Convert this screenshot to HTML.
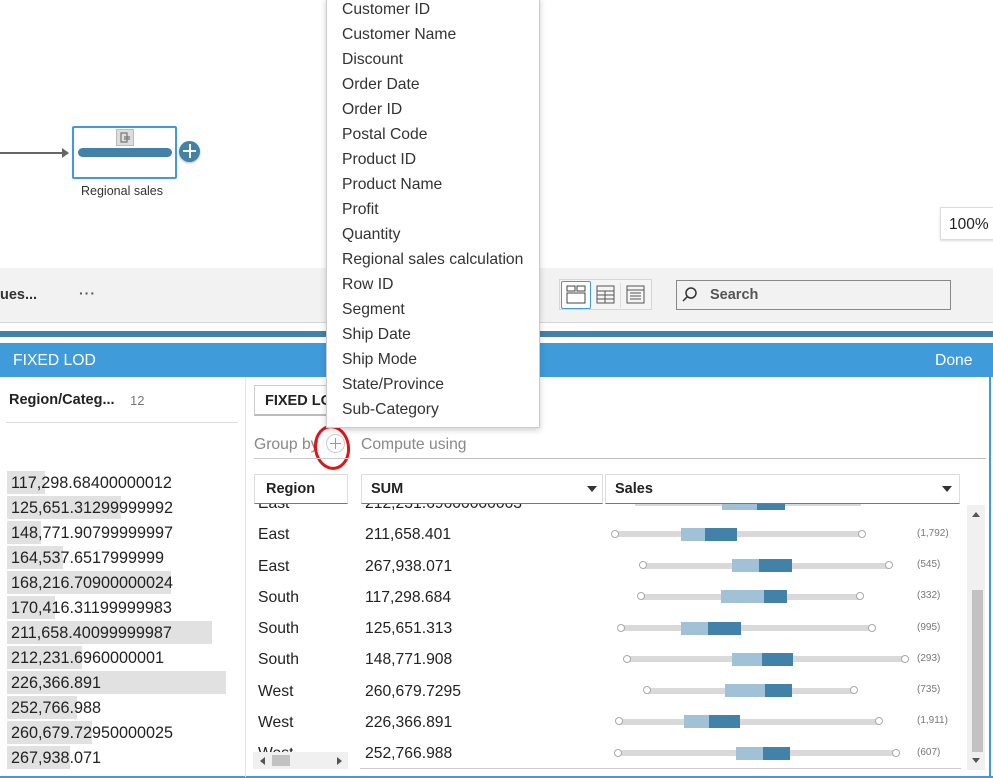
<!DOCTYPE html>
<html><head><meta charset="utf-8">
<style>
*{margin:0;padding:0;box-sizing:border-box}
body{width:993px;height:778px;overflow:hidden;background:#fff;font-family:"Liberation Sans",sans-serif;color:#222;position:relative}
.a{position:absolute}
.t{position:absolute;font-size:15.7px;white-space:nowrap}
.dd div{position:absolute;left:15px;font-size:15.7px;color:#333;white-space:nowrap}
.bar{position:absolute;left:7px;height:23px;background:#e1e1e1}
.num{position:absolute;left:11px;font-size:16.2px;color:#222;white-space:nowrap}
.wh{position:absolute;height:6px;background:#d9d9d9}
.dot{position:absolute;width:8px;height:8px;border:1px solid #aaa;border-radius:50%;background:#fff}
.lb{position:absolute;height:13px;background:#a0c1d6}
.db{position:absolute;height:13px;background:#4281a8}
.cnt{position:absolute;left:917px;font-size:10px;color:#777}
</style></head><body>

<div class="a" style="left:0;top:152px;width:66px;height:2px;background:#666"></div>
<div class="a" style="left:62px;top:148px;width:0;height:0;border-left:7px solid #666;border-top:5px solid transparent;border-bottom:5px solid transparent"></div>
<div class="a" style="left:72px;top:126px;width:105px;height:53px;border:2px solid #3f9bda;border-radius:2px;background:#fff"></div>
<div class="a" style="left:116px;top:129px;width:18px;height:17px;background:#ddd;border:1px solid #bbb"></div>
<svg class="a" style="left:117px;top:130px" width="16" height="15"><path d="M4 3h6v9H4z" fill="none" stroke="#777" stroke-width="1.2"/><path d="M7 7h6M7 9h6" stroke="#777" stroke-width="1.2"/></svg>
<div class="a" style="left:78px;top:148px;width:94px;height:9px;border-radius:5px;background:#4281a8"></div>
<div class="a" style="left:179px;top:141px;width:21px;height:21px;border-radius:50%;background:#4281a8;box-shadow:0 1px 2px rgba(0,0,0,.3)"></div>
<div class="a" style="left:183px;top:150px;width:13px;height:2px;background:#fff"></div>
<div class="a" style="left:189px;top:144px;width:2px;height:14px;background:#fff"></div>
<div class="t" style="left:81px;top:184px;font-size:12.5px;color:#333">Regional sales</div>

<div class="a" style="left:940px;top:207px;width:60px;height:33px;border:1px solid #ddd;box-shadow:0 1px 2px rgba(0,0,0,.15);background:#fff"></div>
<div class="t" style="left:949px;top:216px;font-size:15.5px">100%</div>

<div class="a" style="left:0;top:268px;width:993px;height:55px;background:#f2f2f2;border-bottom:1px solid #d6d6d6"></div>
<div class="t" style="left:0;top:287px;font-weight:bold;font-size:14.5px;color:#333">ues...</div>
<div class="t" style="left:79px;top:285px;font-weight:bold;font-size:14px;color:#555;letter-spacing:1px">···</div>
<div class="a" style="left:559px;top:279px;width:93px;height:31px;border:1px solid #d6d6d6;background:#f5f5f5"></div>
<div class="a" style="left:561px;top:281px;width:30px;height:28px;border:1px solid #3f9bda;border-radius:2px;background:#fff"></div>
<svg class="a" style="left:566px;top:285px" width="20" height="20"><rect x="1" y="1" width="8" height="5" fill="none" stroke="#444"/><rect x="11" y="1" width="8" height="5" fill="none" stroke="#444"/><rect x="1" y="8" width="18" height="10" fill="none" stroke="#444"/></svg>
<svg class="a" style="left:596px;top:285px" width="20" height="20"><rect x="1" y="1" width="17" height="17" fill="none" stroke="#555"/><path d="M1 6h17M1 10h17M1 14h17M9 6v12" stroke="#555"/></svg>
<div class="a" style="left:620px;top:283px;width:1px;height:25px;background:#ddd"></div>
<svg class="a" style="left:626px;top:285px" width="20" height="20"><rect x="1" y="1" width="17" height="17" fill="none" stroke="#555"/><path d="M1 5h17M4 8h11M4 11h11M4 14h11" stroke="#555"/></svg>
<div class="a" style="left:676px;top:280px;width:275px;height:30px;border:1px solid #888;background:#f2f2f2"></div>
<svg class="a" style="left:681px;top:286px" width="18" height="18"><circle cx="10" cy="7" r="5" fill="none" stroke="#333" stroke-width="1.5"/><path d="M6.5 10.5L2 15" stroke="#333" stroke-width="1.5"/></svg>
<div class="t" style="left:710px;top:287px;font-weight:bold;font-size:14.5px;color:#555">Search</div>

<div class="a" style="left:0;top:331px;width:993px;height:6px;background:#4281a8"></div>
<div class="a" style="left:0;top:343px;width:993px;height:34px;background:#3f9bda"></div>
<div class="t" style="left:13px;top:352px;color:#fff">FIXED LOD</div>
<div class="t" style="left:935px;top:352px;color:#fff">Done</div>
<div class="a" style="left:989px;top:343px;width:2px;height:435px;background:#3f9bda"></div>
<div class="a" style="left:0;top:776px;width:993px;height:2px;background:#3f9bda"></div>

<div class="a" style="left:245px;top:377px;width:1px;height:400px;background:#e5e5e5"></div>
<div class="t" style="left:9px;top:392px;font-weight:bold;font-size:14.5px">Region/Categ...</div>
<div class="t" style="left:130px;top:393px;font-size:13px;color:#777">12</div>
<div class="a" style="left:6px;top:422px;width:232px;height:1px;background:#ddd"></div>
<div class="bar" style="top:471px;width:38px"></div><div class="num" style="top:474px">117,298.68400000012</div>
<div class="bar" style="top:496px;width:114px"></div><div class="num" style="top:499px">125,651.31299999992</div>
<div class="bar" style="top:521px;width:34px"></div><div class="num" style="top:524px">148,771.90799999997</div>
<div class="bar" style="top:546px;width:56px"></div><div class="num" style="top:549px">164,537.6517999999</div>
<div class="bar" style="top:571px;width:164px"></div><div class="num" style="top:574px">168,216.70900000024</div>
<div class="bar" style="top:596px;width:48px"></div><div class="num" style="top:599px">170,416.31199999983</div>
<div class="bar" style="top:621px;width:205px"></div><div class="num" style="top:624px">211,658.40099999987</div>
<div class="bar" style="top:646px;width:75px"></div><div class="num" style="top:649px">212,231.6960000001</div>
<div class="bar" style="top:671px;width:219px"></div><div class="num" style="top:674px">226,366.891</div>
<div class="bar" style="top:696px;width:70px"></div><div class="num" style="top:699px">252,766.988</div>
<div class="bar" style="top:721px;width:85px"></div><div class="num" style="top:724px">260,679.72950000025</div>
<div class="bar" style="top:746px;width:63px"></div><div class="num" style="top:749px">267,938.071</div>

<div class="a" style="left:254px;top:385px;width:90px;height:31px;border:1px solid #ccc;border-bottom:2px solid #bbb"></div>
<div class="t" style="left:265px;top:393px;font-weight:bold;font-size:14.5px">FIXED LOD</div>
<div class="t" style="left:254px;top:436px;color:#888">Group by</div>
<div class="a" style="left:326px;top:434px;width:19px;height:19px;border:1px solid #ccc;border-radius:50%"></div>
<div class="a" style="left:330px;top:443px;width:11px;height:1px;background:#999"></div>
<div class="a" style="left:335px;top:438px;width:1px;height:11px;background:#999"></div>
<div class="a" style="left:314px;top:425px;width:36px;height:45px;border:3px solid #e0141b;border-radius:50%;transform:rotate(-8deg)"></div>
<div class="t" style="left:361px;top:436px;color:#888">Compute using</div>
<div class="a" style="left:254px;top:458px;width:94px;height:1px;background:#ccc"></div>
<div class="a" style="left:360px;top:458px;width:626px;height:1px;background:#bbb"></div>

<div class="a" style="left:254px;top:474px;width:94px;height:30px;border:1px solid #ddd;border-bottom:1px solid #777"></div>
<div class="t" style="left:266px;top:481px;font-weight:bold;font-size:14.5px">Region</div>
<div class="a" style="left:361px;top:474px;width:242px;height:30px;border:1px solid #ddd;border-bottom:1px solid #777"></div>
<div class="t" style="left:371px;top:481px;font-weight:bold;font-size:14.5px">SUM</div>
<div class="a" style="left:587px;top:486px;border-top:6px solid #333;border-left:5px solid transparent;border-right:5px solid transparent"></div>
<div class="a" style="left:605px;top:474px;width:355px;height:30px;border:1px solid #ddd;border-bottom:1px solid #777"></div>
<div class="t" style="left:615px;top:481px;font-weight:bold;font-size:14.5px">Sales</div>
<div class="a" style="left:942px;top:486px;border-top:6px solid #333;border-left:5px solid transparent;border-right:5px solid transparent"></div>

<div style="position:absolute;left:0;top:504px;width:993px;height:265px;overflow:hidden">
<div style="position:absolute;left:0;top:-504px;width:993px;height:778px">
<div class="t" style="left:258px;top:495px">East</div><div class="t" style="left:365px;top:495px">212,231.69600000003</div>
<div class="wh" style="left:635px;top:500px;width:226px"></div><div class="lb" style="left:722px;top:497px;width:35px"></div><div class="db" style="left:757px;top:497px;width:28px"></div>
</div></div>

<div class="t" style="left:258px;top:526px">East</div><div class="t" style="left:365px;top:526px">211,658.401</div>
<div class="t" style="left:258px;top:558px">East</div><div class="t" style="left:365px;top:558px">267,938.071</div>
<div class="t" style="left:258px;top:589px">South</div><div class="t" style="left:365px;top:589px">117,298.684</div>
<div class="t" style="left:258px;top:620px">South</div><div class="t" style="left:365px;top:620px">125,651.313</div>
<div class="t" style="left:258px;top:651px">South</div><div class="t" style="left:365px;top:651px">148,771.908</div>
<div class="t" style="left:258px;top:683px">West</div><div class="t" style="left:365px;top:683px">260,679.7295</div>
<div class="t" style="left:258px;top:714px">West</div><div class="t" style="left:365px;top:714px">226,366.891</div>
<div style="position:absolute;left:258px;top:745px;height:8px;overflow:hidden;font-size:15.7px">West</div>
<div class="t" style="left:365px;top:745px">252,766.988</div>

<div class="wh" style="left:615px;top:531px;width:247px"></div><div class="lb" style="left:681px;top:528px;width:24px"></div><div class="db" style="left:705px;top:528px;width:32px"></div><div class="dot" style="left:611px;top:530px"></div><div class="dot" style="left:858px;top:530px"></div><div class="cnt" style="top:528px">(1,792)</div>
<div class="wh" style="left:643px;top:563px;width:246px"></div><div class="lb" style="left:732px;top:559px;width:27px"></div><div class="db" style="left:759px;top:559px;width:33px"></div><div class="dot" style="left:639px;top:561px"></div><div class="dot" style="left:885px;top:561px"></div><div class="cnt" style="top:559px">(545)</div>
<div class="wh" style="left:641px;top:594px;width:219px"></div><div class="lb" style="left:721px;top:590px;width:43px"></div><div class="db" style="left:764px;top:590px;width:23px"></div><div class="dot" style="left:637px;top:592px"></div><div class="dot" style="left:856px;top:592px"></div><div class="cnt" style="top:590px">(332)</div>
<div class="wh" style="left:621px;top:625px;width:251px"></div><div class="lb" style="left:681px;top:622px;width:27px"></div><div class="db" style="left:708px;top:622px;width:33px"></div><div class="dot" style="left:617px;top:624px"></div><div class="dot" style="left:868px;top:624px"></div><div class="cnt" style="top:622px">(995)</div>
<div class="wh" style="left:627px;top:656px;width:278px"></div><div class="lb" style="left:732px;top:653px;width:30px"></div><div class="db" style="left:762px;top:653px;width:31px"></div><div class="dot" style="left:623px;top:655px"></div><div class="dot" style="left:901px;top:655px"></div><div class="cnt" style="top:653px">(293)</div>
<div class="wh" style="left:647px;top:688px;width:207px"></div><div class="lb" style="left:725px;top:684px;width:40px"></div><div class="db" style="left:765px;top:684px;width:27px"></div><div class="dot" style="left:643px;top:686px"></div><div class="dot" style="left:850px;top:686px"></div><div class="cnt" style="top:684px">(735)</div>
<div class="wh" style="left:619px;top:719px;width:260px"></div><div class="lb" style="left:684px;top:715px;width:25px"></div><div class="db" style="left:709px;top:715px;width:31px"></div><div class="dot" style="left:615px;top:717px"></div><div class="dot" style="left:875px;top:717px"></div><div class="cnt" style="top:715px">(1,911)</div>
<div class="wh" style="left:618px;top:750px;width:278px"></div><div class="lb" style="left:736px;top:747px;width:27px"></div><div class="db" style="left:763px;top:747px;width:27px"></div><div class="dot" style="left:614px;top:749px"></div><div class="dot" style="left:892px;top:749px"></div><div class="cnt" style="top:747px">(607)</div>

<div class="a" style="left:360px;top:768px;width:601px;height:1px;background:#ccc"></div>
<div class="a" style="left:253px;top:752px;width:95px;height:17px;background:#f0f0f0"></div>
<div class="a" style="left:260px;top:757px;border-right:5px solid #555;border-top:4px solid transparent;border-bottom:4px solid transparent"></div>
<div class="a" style="left:272px;top:755px;width:18px;height:11px;background:#c2c2c2"></div>
<div class="a" style="left:337px;top:757px;border-left:5px solid #555;border-top:4px solid transparent;border-bottom:4px solid transparent"></div>
<div class="a" style="left:967px;top:505px;width:18px;height:265px;background:#f0f0f0"></div>
<div class="a" style="left:972px;top:512px;border-bottom:5px solid #555;border-left:4px solid transparent;border-right:4px solid transparent"></div>
<div class="a" style="left:972px;top:590px;width:11px;height:162px;background:#c2c2c2"></div>
<div class="a" style="left:972px;top:758px;border-top:5px solid #555;border-left:4px solid transparent;border-right:4px solid transparent"></div>

<div class="a dd" style="left:326px;top:-2px;width:214px;height:430px;background:#fff;border:1px solid #ccc;box-shadow:0 2px 6px rgba(0,0,0,.2)">
<div style="top:2px">Customer ID</div>
<div style="top:27px">Customer Name</div>
<div style="top:52px">Discount</div>
<div style="top:77px">Order Date</div>
<div style="top:102px">Order ID</div>
<div style="top:127px">Postal Code</div>
<div style="top:152px">Product ID</div>
<div style="top:177px">Product Name</div>
<div style="top:202px">Profit</div>
<div style="top:227px">Quantity</div>
<div style="top:252px">Regional sales calculation</div>
<div style="top:277px">Row ID</div>
<div style="top:302px">Segment</div>
<div style="top:327px">Ship Date</div>
<div style="top:352px">Ship Mode</div>
<div style="top:377px">State/Province</div>
<div style="top:402px">Sub-Category</div>
</div>
</body></html>
